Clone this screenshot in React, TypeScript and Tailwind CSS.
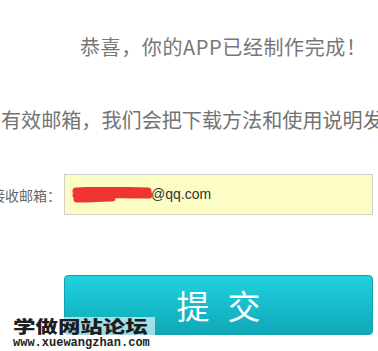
import React from "react";

export default function App() {
  const cjk = { fontFamily: '"Noto Sans CJK SC", "Noto Sans", sans-serif' };
  return (
    <div className="relative w-[378px] h-[351px] overflow-hidden bg-white" style={cjk}>
      <div className="pt-[34px] pl-[80px] whitespace-nowrap text-[20px] leading-[26px] tracking-[0.6px] text-[#777]">
        恭喜，你的APP已经制作完成！
      </div>
      <div className="mt-[47px] pl-[1px] whitespace-nowrap text-[20.1px] leading-[26px] text-[#737373]">
        有效邮箱，我们会把下载方法和使用说明发送给您
      </div>
      <div className="mt-[41px] flex items-center">
        <div className="flex w-[64px] shrink-0 justify-end whitespace-nowrap pr-[3px] text-[14px] leading-[20px] text-[#666]">
          <span>接收邮箱：</span>
        </div>
        <div className="flex h-[41px] w-[309px] items-center border border-[#d2d2c4] bg-[#fbfdc4] pl-[7px] text-[14px] text-[#333]" style={{ fontFamily: '"Liberation Sans", Arial, sans-serif' }}>
          <svg width="80" height="16" viewBox="0 0 80 16" className="shrink-0">
            <path d="M4 4 C 20 3, 45 3, 76 4 M4 8 C 25 7, 50 8, 77 8 M5 12 C 20 12, 30 11, 40 11" stroke="#f03434" strokeWidth="7" strokeLinecap="round" fill="none" />
          </svg>
          <span className="-ml-[1px]">@qq.com</span>
        </div>
      </div>
      <div className="ml-[64px] mt-[60px] flex h-[60px] w-[309px] items-center justify-center gap-[18px] rounded-[4px] border border-[#12a3b1] bg-gradient-to-b from-[#20d2df] to-[#0fa8b7] text-[33px] leading-none text-white">
        <span>提</span>
        <span>交</span>
      </div>
      <div className="absolute left-0 top-[317px] h-[34px] w-[155px]">
        <div className="h-[18px] bg-[rgba(255,255,255,0.6)] pl-[13px]">
          <div className="origin-left scale-x-[1.32] whitespace-nowrap text-[17px] font-black leading-[18px] text-[#1c1c24]">
            学做网站论坛
          </div>
        </div>
        <div className="h-[16px] bg-white pl-[13px] text-[12px] font-bold leading-[16px] text-[#222]" style={{ fontFamily: '"Liberation Mono", "Courier New", monospace' }}>
          www.xuewangzhan.com
        </div>
      </div>
    </div>
  );
}
